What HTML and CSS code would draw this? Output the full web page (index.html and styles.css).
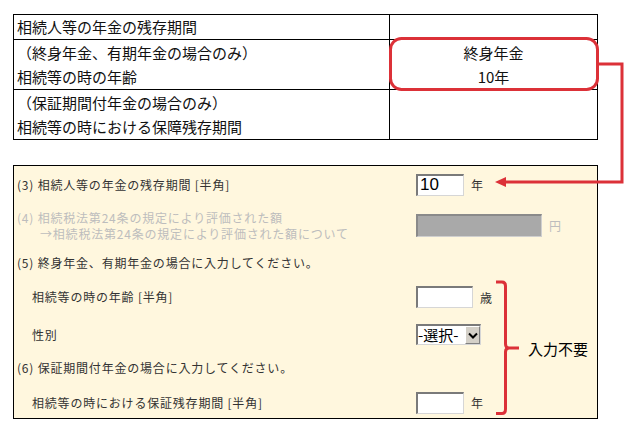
FILE: index.html
```html
<!DOCTYPE html>
<html lang="ja">
<head>
    <meta charset="UTF-8">
    <meta name="viewport" content="width=device-width, initial-scale=1.0">
    <title>年金の残存期間</title>
    <link rel="stylesheet" href="styles.css">
</head>
<body>
    <div class="page">
        <!-- 元の表 -->
        <table class="info">
            <tr class="row-one">
                <td class="label-cell">相続人等の年金の残存期間</td>
                <td class="value-cell"></td>
            </tr>
            <tr class="row-two">
                <td class="label-cell">（終身年金、有期年金の場合のみ）<br>相続等の時の年齢</td>
                <td class="value-cell">終身年金<br>10年</td>
            </tr>
            <tr class="row-two">
                <td class="label-cell">（保証期間付年金の場合のみ）<br>相続等の時における保障残存期間</td>
                <td class="value-cell"></td>
            </tr>
        </table>

        <!-- 入力フォーム -->
        <div class="form-panel">
            <div class="f-label">(3) 相続人等の年金の残存期間 [半角]</div>
            <div class="f-ctrl">
                <input type="text" class="txt txt-short" value="10">
                <span class="unit">年</span>
            </div>

            <div class="f-label muted">(4) 相続税法第24条の規定により評価された額<br><span class="sub">→相続税法第24条の規定により評価された額について</span></div>
            <div class="f-ctrl">
                <input type="text" class="txt txt-wide" disabled>
                <span class="unit muted">円</span>
            </div>

            <div class="f-label span-all">(5) 終身年金、有期年金の場合に入力してください。</div>

            <div class="f-label indent">相続等の時の年齢 [半角]</div>
            <div class="f-ctrl">
                <input type="text" class="txt txt-mid">
                <span class="unit">歳</span>
            </div>

            <div class="f-label indent">性別</div>
            <div class="f-ctrl">
                <div class="sel-box">
                    <select class="sel">
                        <option>-選択-</option>
                        <option>男</option>
                        <option>女</option>
                    </select>
                    <span class="sel-arrow">
                        <svg width="10" height="7" viewBox="0 0 10 7"><path d="M1 1.5 L5 5.5 L9 1.5" fill="none" stroke="#000" stroke-width="2"/></svg>
                    </span>
                </div>
            </div>

            <div class="f-label span-all">(6) 保証期間付年金の場合に入力してください。</div>

            <div class="f-label indent last">相続等の時における保証残存期間 [半角]</div>
            <div class="f-ctrl last">
                <input type="text" class="txt txt-short">
                <span class="unit">年</span>
            </div>
        </div>

        <!-- 注記（赤枠・矢印・括弧） -->
        <svg class="marks" width="633" height="432" viewBox="0 0 633 432">
            <rect x="390.5" y="38.5" width="207" height="51" rx="11" fill="none" stroke="#dc3138" stroke-width="3"/>
            <polyline points="599,64 622,64 622,182 504,182" fill="none" stroke="#dc3138" stroke-width="3"/>
            <polygon points="495,182 506,177 506,187" fill="#dc3138"/>
            <path d="M496 282 H502 Q505.5 282 505.5 286 V344 Q505.5 348 509 348 H519 M509 348 Q505.5 348 505.5 352 V409 Q505.5 413.5 502 413.5 H496" fill="none" stroke="#dc3138" stroke-width="3"/>
        </svg>
        <div class="note">入力不要</div>
    </div>
</body>
</html>
```

FILE: styles.css
```css
body {
    margin: 0;
    background: #ffffff;
    font-family: "Noto Sans CJK JP", "Noto Sans", sans-serif;
    color: #000;
}

.page {
    position: relative;
    width: 633px;
    height: 432px;
    overflow: hidden;
    padding-top: 14px;
    box-sizing: border-box;
}

/* 上の表 */
.info {
    margin-left: 13px;
    width: 585px;
    border-collapse: collapse;
    font-size: 15px;
    line-height: 24px;
    color: #111;
}

.info td {
    border: 1px solid #000;
    padding: 0 3px;
    vertical-align: middle;
}

.info .label-cell {
    width: 369px;
}

.info .value-cell {
    text-align: center;
}

.row-one td {
    height: 24px;
}

.row-two td {
    height: 49px;
}

/* 入力フォーム */
.form-panel {
    margin: 25px 0 0 13px;
    width: 585px;
    height: 254px;
    box-sizing: border-box;
    border: 1px solid #000;
    background: #fff7de;
    display: grid;
    grid-template-columns: 402px 1fr;
    grid-template-rows: 37px 45px 30px 38px 37px 29px 1fr;
    font-size: 12px;
    letter-spacing: 0.8px;
    color: #333;
}

.f-label {
    display: flex;
    flex-direction: column;
    justify-content: center;
    padding-left: 3px;
    line-height: 16px;
}

.f-label.indent {
    padding-left: 18px;
}

.f-label.span-all {
    grid-column: 1 / 3;
}

.f-label .sub {
    padding-left: 23px;
}

.muted {
    color: #bdbdbd;
}

.f-ctrl {
    display: flex;
    align-items: center;
    gap: 7px;
}

.last {
    padding-top: 5px;
}

.unit {
    font-size: 12px;
}

.txt {
    box-sizing: border-box;
    height: 22px;
    margin: 0;
    padding: 0 2px;
    font-family: "Liberation Sans", sans-serif;
    font-size: 17px;
    letter-spacing: 0;
    color: #000;
    background: #fff;
    border-top: 2px solid #7a7a7a;
    border-left: 2px solid #7a7a7a;
    border-right: 1px solid #d6d6d6;
    border-bottom: 1px solid #d6d6d6;
    outline: none;
}

.txt-short {
    width: 48px;
}

.txt-mid {
    width: 57px;
}

.txt-wide {
    width: 126px;
    height: 23px;
    background: #a9a9a9;
    border-top: 2px solid #8a8a8a;
    border-left: 2px solid #8a8a8a;
    border-right: 1px solid #cfcfcf;
    border-bottom: 1px solid #cfcfcf;
}

.sel-box {
    display: flex;
    box-sizing: border-box;
    height: 21px;
    width: 65px;
    border-top: 2px solid #7a7a7a;
    border-left: 2px solid #7a7a7a;
    border-right: 1px solid #d6d6d6;
    border-bottom: 1px solid #d6d6d6;
    background: #fff;
}

.sel {
    appearance: none;
    -webkit-appearance: none;
    border: none;
    margin: 0;
    padding: 0;
    width: 47px;
    height: 18px;
    font-family: "Noto Sans CJK JP", sans-serif;
    font-size: 15px;
    line-height: 18px;
    letter-spacing: 0;
    color: #000;
    background: #fff;
    outline: none;
}

.sel-arrow {
    flex: 1;
    display: flex;
    align-items: center;
    justify-content: center;
    background: #d4d0c8;
    border-left: 1px solid #fff;
    border-top: 1px solid #fff;
    border-right: 1px solid #808080;
    border-bottom: 1px solid #808080;
}

/* 注記 */
.marks {
    position: absolute;
    left: 0;
    top: 0;
    pointer-events: none;
}

.note {
    position: absolute;
    left: 528px;
    top: 338px;
    font-size: 15px;
    line-height: 22px;
}
```
